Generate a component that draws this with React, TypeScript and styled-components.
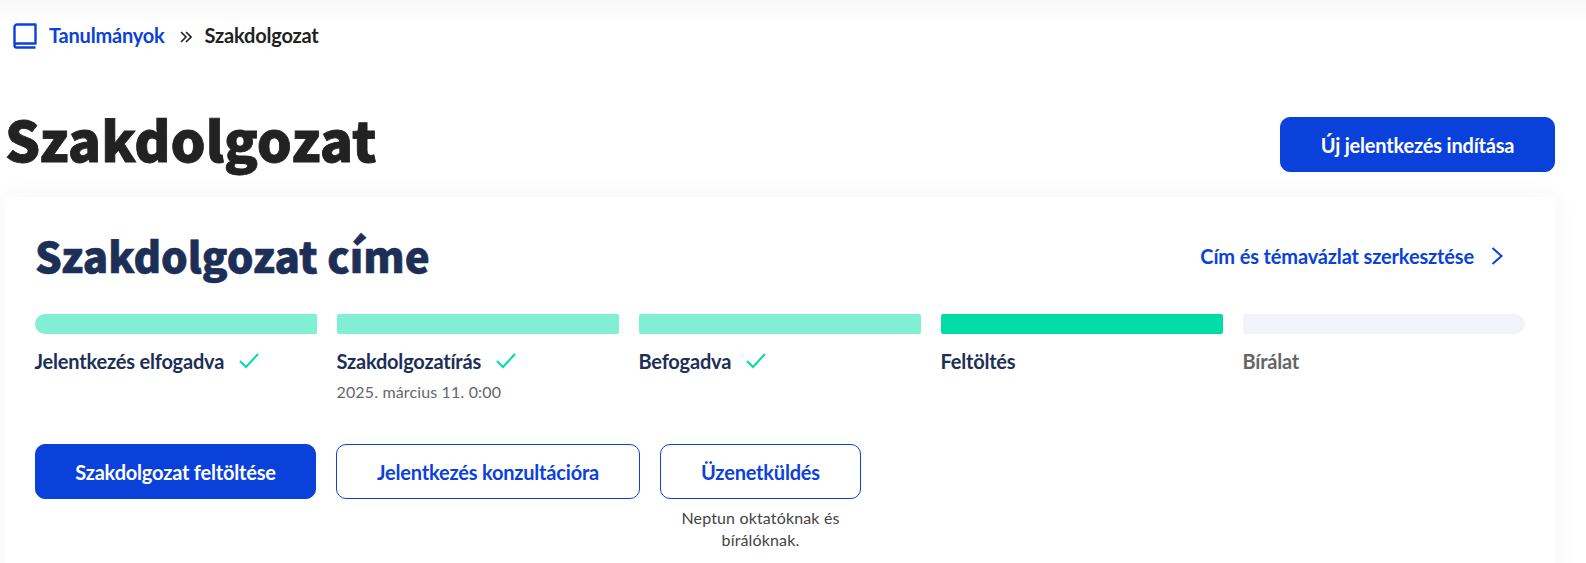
import React from "react";
import styled, { createGlobalStyle } from "styled-components";

const Global = createGlobalStyle`
  html, body { margin: 0; padding: 0; background: #fff; }
  body { font-family: Lato, "Liberation Sans", sans-serif; width: 1586px; height: 563px; overflow: hidden; }
`;

const Page = styled.div`
  height: 563px;
  overflow: hidden;
  background: linear-gradient(#f7f7f7 0, #fff 22px);
`;
const Breadcrumb = styled.nav`
  display: flex;
  align-items: center;
  height: 26px;
  padding: 23px 0 0 13px;
  font-size: 20px;
  font-weight: 700;
  letter-spacing: -0.2px;
`;
const Crumb = styled.a`
  color: #0b41db;
  margin-top: -3px;
  margin-left: 12px;
`;
const Separator = styled.span`
  display: flex;
  margin: 2px 14px 0 15px;
`;
const Current = styled.span`
  margin-top: -3px;
  margin-left: -1px;
  color: #222;
`;
const Header = styled.header`
  display: flex;
  justify-content: space-between;
  align-items: flex-start;
  padding: 68px 31px 0 5px;
  height: 80px;
`;
const PageTitle = styled.h1`
  margin: 0;
  font-family: "Noto Sans CJK SC", "Noto Sans", sans-serif;
  font-size: 55.2px;
  line-height: 43px;
  font-weight: 900;
  -webkit-text-stroke: 0.8px #222;
  color: #222;
`;
const Button = styled.button<{ $outline?: boolean; $w: number }>`
  box-sizing: border-box;
  width: ${(p) => p.$w}px;
  height: 55px;
  border-radius: 10px;
  border: 1px solid #0b41db;
  background: ${(p) => (p.$outline ? "#fff" : "#0b41db")};
  color: ${(p) => (p.$outline ? "#0b41db" : "#fff")};
  font-family: Lato, sans-serif;
  font-size: 20px;
  font-weight: 700;
  letter-spacing: -0.2px;
  padding: 0;
`;
const Card = styled.section`
  box-sizing: border-box;
  margin: 0 31px 0 5px;
  height: 400px;
  padding: 30px;
  background: #fff;
  box-shadow: 0 0 24px rgba(0, 0, 0, 0.05);
`;
const CardHead = styled.div`
  display: flex;
  justify-content: space-between;
  align-items: center;
  height: 58px;
  padding-right: 22px;
`;
const CardTitle = styled.h2`
  margin: -3px 0 0;
  font-family: "Noto Sans CJK SC", "Noto Sans", sans-serif;
  font-size: 42px;
  line-height: 58px;
  font-weight: 900;
  -webkit-text-stroke: 0.6px #1e2f57;
  color: #1e2f57;
`;
const EditLink = styled.a`
  display: flex;
  align-items: center;
  gap: 17px;
  color: #0b41db;
  font-size: 20px;
  font-weight: 700;
  letter-spacing: -0.15px;
`;
const Steps = styled.div`
  display: grid;
  grid-template-columns: repeat(5, 282px);
  gap: 20px;
  margin-top: 29px;
`;
const Bar = styled.div<{ $color: string; $pos?: "first" | "last" }>`
  height: 20px;
  background: ${(p) => p.$color};
  border-radius: ${(p) =>
    p.$pos === "first" ? "10px 2px 2px 10px" : p.$pos === "last" ? "2px 10px 10px 2px" : "2px"};
`;
const StepLabel = styled.div<{ $muted?: boolean }>`
  display: flex;
  align-items: center;
  gap: 15px;
  height: 24px;
  margin-top: 15px;
  margin-left: -0.5px;
  font-size: 20px;
  font-weight: 700;
  letter-spacing: -0.2px;
  color: ${(p) => (p.$muted ? "#666" : "#1e2f57")};
`;
const StepDate = styled.div`
  margin-top: 9px;
  margin-left: -0.5px;
  font-size: 16px;
  line-height: 20px;
  letter-spacing: 0.15px;
  color: #666;
`;
const Actions = styled.div`
  display: flex;
  gap: 20px;
`;
const ActionColumn = styled.div`
  display: flex;
  flex-direction: column;
  align-items: center;
`;
const Hint = styled.div`
  width: 180px;
  margin-top: 8px;
  text-align: center;
  font-size: 16px;
  line-height: 22px;
  letter-spacing: 0.15px;
  color: #444;
`;
const StepCell = styled.div`
  height: 130px;
`;

const Check = () => (
  <svg width="20" height="16" viewBox="0 0 20 16" fill="none" stroke="#00dda6" strokeWidth="2">
    <path d="M1 8l6 6L19 1" />
  </svg>
);

const steps = [
  { label: "Jelentkezés elfogadva", color: "#80efd3", done: true, pos: "first" as const },
  { label: "Szakdolgozatírás", color: "#80efd3", done: true, date: "2025. március 11. 0:00" },
  { label: "Befogadva", color: "#80efd3", done: true },
  { label: "Feltöltés", color: "#00dda6" },
  { label: "Bírálat", color: "#f2f3fb", muted: true, pos: "last" as const },
];

export default function App() {
  return (
    <Page>
      <Global />
      <Breadcrumb>
        <svg width="24" height="26" viewBox="0 0 24 26" fill="none" stroke="#0b41db" strokeWidth="2.4" strokeLinejoin="round">
          <path d="M1.5 21V4a2.5 2.5 0 0 1 2.5-2.5h18.5V20.5H4a2.5 2.5 0 0 0-2.5 2.5 1.8 1.8 0 0 0 1.8 1.5h19.2" />
        </svg>
        <Crumb>Tanulmányok</Crumb>
        <Separator>
          <svg width="12" height="12" viewBox="0 0 12 12" fill="none" stroke="#222" strokeWidth="1.6">
            <path d="M1 1l5 5-5 5M6 1l5 5-5 5" />
          </svg>
        </Separator>
        <Current>Szakdolgozat</Current>
      </Breadcrumb>
      <Header>
        <PageTitle>Szakdolgozat</PageTitle>
        <Button $w={275}>Új jelentkezés indítása</Button>
      </Header>
      <Card>
        <CardHead>
          <CardTitle>Szakdolgozat címe</CardTitle>
          <EditLink>
            Cím és témavázlat szerkesztése
            <svg width="12" height="18" viewBox="0 0 12 18" fill="none" stroke="#0b41db" strokeWidth="2">
              <path d="M1.5 1l9 8-9 8" />
            </svg>
          </EditLink>
        </CardHead>
        <Steps>
          {steps.map((s) => (
            <StepCell key={s.label}>
              <Bar $color={s.color} $pos={s.pos} />
              <StepLabel $muted={s.muted}>
                {s.label}
                {s.done && <Check />}
              </StepLabel>
              {s.date && <StepDate>{s.date}</StepDate>}
            </StepCell>
          ))}
        </Steps>
        <Actions>
          <Button $w={281}>Szakdolgozat feltöltése</Button>
          <Button $outline $w={304}>Jelentkezés konzultációra</Button>
          <ActionColumn>
            <Button $outline $w={201}>Üzenetküldés</Button>
            <Hint>Neptun oktatóknak és bírálóknak.</Hint>
          </ActionColumn>
        </Actions>
      </Card>
    </Page>
  );
}
